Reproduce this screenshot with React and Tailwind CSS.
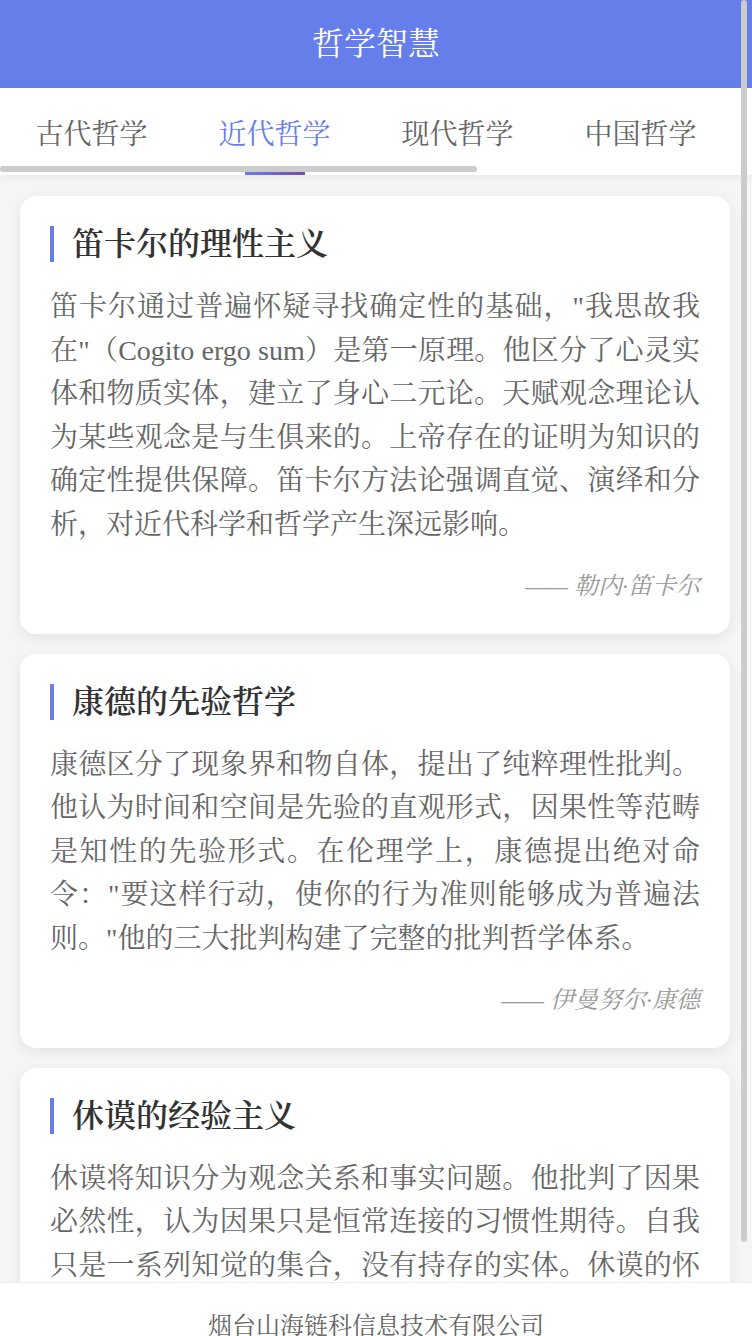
import React, { useState } from 'react';

const tabs = ['古代哲学', '近代哲学', '现代哲学', '中国哲学', '印度哲学', '政治哲学'];

const cards = [
  {
    title: '笛卡尔的理性主义',
    body: '笛卡尔通过普遍怀疑寻找确定性的基础，"我思故我在"（Cogito ergo sum）是第一原理。他区分了心灵实体和物质实体，建立了身心二元论。天赋观念理论认为某些观念是与生俱来的。上帝存在的证明为知识的确定性提供保障。笛卡尔方法论强调直觉、演绎和分析，对近代科学和哲学产生深远影响。',
    author: '勒内·笛卡尔',
  },
  {
    title: '康德的先验哲学',
    body: '康德区分了现象界和物自体，提出了纯粹理性批判。他认为时间和空间是先验的直观形式，因果性等范畴是知性的先验形式。在伦理学上，康德提出绝对命令："要这样行动，使你的行为准则能够成为普遍法则。"他的三大批判构建了完整的批判哲学体系。',
    author: '伊曼努尔·康德',
  },
  {
    title: '休谟的经验主义',
    body: '休谟将知识分为观念关系和事实问题。他批判了因果必然性，认为因果只是恒常连接的习惯性期待。自我只是一系列知觉的集合，没有持存的实体。休谟的怀疑论对理性主义形而上学构成了深刻挑战。',
    author: '大卫·休谟',
  },
];

const TAB_W = 183;

export default function App() {
  const [active, setActive] = useState(1);

  return (
    <div className="relative h-screen overflow-y-auto bg-[#f5f5f5] font-['Liberation_Serif','Noto_Serif_CJK_SC','Source_Han_Serif_SC','AR_PL_UMing_CN','Noto_Sans_CJK_SC',serif]">
      {/* page scroll indicator */}
      <div className="fixed top-0 right-[5px] z-10 w-[6px] h-[1242px] rounded-full bg-[#cccccc]" />

      <header className="h-[88px] bg-[#667eea] flex items-center justify-center">
        <h1 className="text-[32px] leading-[40px] text-white">哲学智慧</h1>
      </header>

      <div className="bg-white shadow-[0_2px_6px_rgba(0,0,0,0.06)]">
        <div className="flex overflow-x-auto">
          {tabs.map((t, i) => (
            <button
              key={t}
              onClick={() => setActive(i)}
              className={`shrink-0 w-[183px] pt-[26px] pb-[10px] text-[28px] leading-[42px] text-center ${
                i === active ? 'text-[#667eea]' : 'text-[#666666]'
              }`}
            >
              {t}
            </button>
          ))}
        </div>
        {/* tab scroll indicator */}
        <div className="h-[6px]">
          <div className="h-[6px] w-[477px] rounded-full bg-[#cccccc]" />
        </div>
        <div className="h-[3px]">
          <div
            className="h-[3px] w-[60px] bg-gradient-to-r from-[#667eea] to-[#764ba2]"
            style={{ marginLeft: active * TAB_W + (TAB_W - 60) / 2 }}
          />
        </div>
      </div>

      <main className="pl-[20px] pr-[22px] pt-[21px] pb-[20px] flex flex-col gap-[20px]">
        {cards.map((c) => (
          <section
            key={c.title}
            className="bg-white rounded-[16px] p-[30px] shadow-[0_4px_14px_rgba(0,0,0,0.07)]"
          >
            <h2 className="border-l-4 border-[#667eea] pl-[18px] text-[32px] leading-[36px] text-[#333333] font-semibold">
              {c.title}
            </h2>
            <p className="mt-[23px] text-[28px] leading-[43.6px] text-[#666666] text-justify">
              {c.body}
            </p>
            <p className="mt-[21px] text-right text-[24px] leading-[36px] italic text-[#999999]">
              —— {c.author}
            </p>
          </section>
        ))}
      </main>

      <footer className="fixed left-0 right-0 bottom-0 z-20 h-[54px] overflow-hidden bg-white border-t border-[#eeeeee] pt-[25px] text-center text-[24px] leading-[36px] text-[#666666]">
        烟台山海链科信息技术有限公司
      </footer>
    </div>
  );
}
